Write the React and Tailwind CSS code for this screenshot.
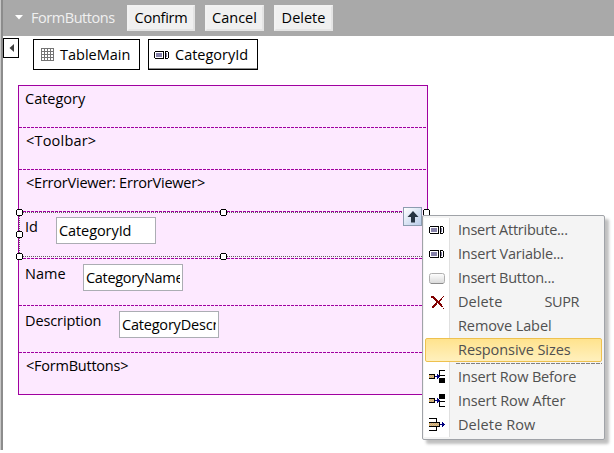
import React from "react";

const AttributeIcon = () => (
  <svg width="15" height="8" viewBox="0 0 15 8" shapeRendering="crispEdges">
    <path d="M1 1h13v6h-13z" fill="#fff" />
    <path d="M1 0h9v1h-9zM11 0h3v1h-3zM1 7h9v1h-9zM11 7h3v1h-3zM0 1h1v6h-1zM14 1h1v6h-1zM9 1h1v6h-1zM11 1h1v6h-1z" fill="#000" />
    <path d="M2 2h6v4h-6zM12 2h1v4h-1z" fill="#8480a8" />
  </svg>
);

const GridIcon = () => (
  <svg width="13" height="13" viewBox="0 0 13 13" shapeRendering="crispEdges">
    <path d="M.5 0v13M3.5 0v13M6.5 0v13M9.5 0v13M12.5 0v13M0 .5h13M0 3.5h13M0 6.5h13M0 9.5h13M0 12.5h13" stroke="#747474" />
  </svg>
);

const ButtonIcon = () => (
  <svg width="16" height="11" viewBox="0 0 16 11">
    <defs>
      <linearGradient id="face" x2="0" y2="1">
        <stop stopColor="#fff" />
        <stop offset="1" stopColor="#d9d9d9" />
      </linearGradient>
    </defs>
    <rect x=".5" y=".5" width="15" height="10" rx="2" fill="url(#face)" stroke="#b0b0b0" />
    <path d="M2 10.5h12" stroke="#8c8c8c" />
  </svg>
);

const DeleteIcon = () => (
  <svg width="14" height="13" viewBox="0 0 14 13" shapeRendering="crispEdges" className="ml-0.5">
    <path
      d="M0 0h3v1h-3zM0 1h4v1h-4zM2 2h3v1h-3zM3 3h3v1h-3zM4 4h3v1h-3zM5 5h4v1h-4zM5 6h4v1h-4zM4 7h2v1h-2zM7 7h3v1h-3zM3 8h3v1h-3zM8 8h3v1h-3zM2 9h3v1h-3zM9 9h2v1h-2zM1 10h3v1h-3zM10 10h2v1h-2zM1 11h2v1h-2zM12 12h1v1h-1zM8 4h2v1h-2zM9 3h2v1h-2zM10 2h1v1h-1zM11 1h1v1h-1zM12 0h1v1h-1z"
      fill="#800000"
    />
  </svg>
);

const Hatch = ({ x, y, w, h }) => (
  <>
    <rect x={x} y={y} width={w} height={h} fill="#e8b040" />
    {Array.from({ length: w * h }, (_, i) => [i % w, Math.floor(i / w)])
      .filter(([a, b]) => (a + b) % 2)
      .map(([a, b]) => (
        <rect key={`${a}-${b}`} x={x + a} y={y + b} width="1" height="1" fill="#b8b4c0" />
      ))}
  </>
);

const InsertRowIcon = ({ after }) => (
  <svg width="17" height="14" viewBox="0 0 17 14" shapeRendering="crispEdges">
    <path d="M0 4h6v1h-6zM0 8h6v1h-6zM5 5h1v3h-1z" />
    <Hatch x={0} y={5} w={5} h={3} />
    <path d="M6 6h3v1h-3zM8 4h1v5h-1zM9 5h1v3h-1zM10 6h1v1h-1z" fill="#000080" />
    {after ? (
      <path d="M10 0h6v5h-6zM10 8h1v5h-1zM10 7h6v1h-6zM10 12h6v1h-6z" />
    ) : (
      <path d="M10 0h6v1h-6zM10 1h1v4h-1zM10 5h6v1h-6zM10 8h6v5h-6z" />
    )}
  </svg>
);

const DeleteRowIcon = () => (
  <svg width="17" height="14" viewBox="0 0 17 14" shapeRendering="crispEdges">
    <path d="M0 0h8v1h-8zM7 1h1v3h-1zM0 4h11v1h-11zM0 8h11v1h-11zM10 5h1v3h-1zM7 9h1v3h-1zM0 12h8v1h-8z" />
    <Hatch x={0} y={5} w={10} h={3} />
    <path d="M11 6h5v1h-5zM13 4h1v5h-1zM14 5h1v3h-1z" fill="#000080" />
  </svg>
);

const Handle = ({ className }) => (
  <svg width="7" height="7" viewBox="0 0 7 7" shapeRendering="crispEdges" className={`absolute ${className}`}>
    <path d="M1 0h5v1h1v5h-1v1h-5v-1h-1v-5h1z" fill="#000" />
    <path d="M1 1h5v5h-5z" fill="#fff" />
  </svg>
);

const ToolButton = ({ className, children }) => (
  <button className={`h-[26px] border-2 border-t-[#f2f2f2] border-l-[#f2f2f2] border-r-[#e4e4e4] border-b-[#e4e4e4] bg-[#f0f0f0] leading-[22px] ${className}`}>
    {children}
  </button>
);

const Row = ({ className = "h-[47px]", children }) => (
  <div className={`relative flex shrink-0 items-start pl-1.5 ${className}`}>
    {children}
    <svg className="absolute bottom-0 left-0 h-px w-full" shapeRendering="crispEdges">
      <path d="M0 .5h408" stroke="#a000a0" strokeDasharray="3 1" />
    </svg>
  </div>
);

const Field = ({ className = "", children }) => (
  <div className="mt-[5px] h-[27px] w-[100px] border border-[#abadb3] bg-white px-0.5">
    <div className={`h-[25px] overflow-hidden whitespace-nowrap leading-[26px] ${className}`}>{children}</div>
  </div>
);

const menuTop = [
  ["Insert Attribute...", <AttributeIcon />, "tracking-[-0.25px]"],
  ["Insert Variable...", <AttributeIcon />, "tracking-[-0.2px]"],
  ["Insert Button...", <ButtonIcon />, "tracking-[-0.25px]"],
  ["Delete", <DeleteIcon />, "tracking-[0.1px]", "SUPR"],
  ["Remove Label", null, "tracking-[-0.1px]"],
  ["Responsive Sizes", null, "tracking-[-0.07px]"],
];
const menuBottom = [
  ["Insert Row Before", <InsertRowIcon />, "tracking-[-0.15px]"],
  ["Insert Row After", <InsertRowIcon after />, "tracking-[-0.1px]"],
  ["Delete Row", <DeleteRowIcon />, "tracking-[0.1px]"],
];

const MenuItem = ({ item: [label, icon, track, shortcut] }) => {
  const active = label === "Responsive Sizes";
  return (
    <div
      className={`relative flex h-6 items-center ${
        active ? "rounded-[2px] border border-[#eec14f] bg-linear-to-b from-[#ffe38d] to-[#fff0bd]" : "border border-transparent"
      }`}
    >
      <span className="flex w-[32px] shrink-0 items-center pl-[3px]">{icon}</span>
      <span className={`leading-[22px] whitespace-nowrap text-[#505050] ${track}`}>{label}</span>
      {shortcut && <span className="ml-auto mr-[22px] leading-[22px] tracking-[-0.4px] text-[#505050]">{shortcut}</span>}
    </div>
  );
};

export default function App() {
  return (
    <div className="relative h-[453px] w-[614px] overflow-hidden bg-white font-['Open_Sans','Noto_Sans',sans-serif] text-[14.5px] text-black">
      <div className="flex h-[450px]">
        <div className="w-[3px] shrink-0 border-r-2 border-[#8c8c8c] bg-[#c8c8c8]" />
        <div className="flex grow flex-col">
          <header className="flex h-9 items-start bg-[#a9a9a9] pt-[5px]">
            <svg width="8" height="5" viewBox="0 0 8 5" className="mt-[10px] ml-3">
              <path d="M0 0h8l-4 4.500z" fill="#fff" />
            </svg>
            <span className="ml-2 w-[96px] leading-[26px] tracking-[-0.45px] text-[#f0f0f0]">FormButtons</span>
            <ToolButton className="w-[68px] tracking-[-0.25px]">Confirm</ToolButton>
            <ToolButton className="ml-2.5 w-[59px]">Cancel</ToolButton>
            <ToolButton className="ml-2.5 w-[59px]">Delete</ToolButton>
          </header>

          <nav className="flex h-[49px] items-start pt-[3px]">
            <div className="-mt-px flex h-5 w-4 items-center justify-center border border-black">
              <svg width="5" height="8" viewBox="0 0 5 8">
                <path d="M5 0v8l-4.500-4z" fill="#404040" />
              </svg>
            </div>
            <div className="ml-3.5 flex h-[31px] w-[107px] items-center border border-black pl-[7px]">
              <GridIcon />
              <span className="ml-1.5 leading-[29px]">TableMain</span>
            </div>
            <div className="ml-2 flex h-[31px] w-[110px] items-center border border-black pl-[5px] shadow-[inset_0_-1px_0_#909090]">
              <AttributeIcon />
              <span className="ml-1.5 leading-[29px]">CategoryId</span>
            </div>
          </nav>

          <main className="relative ml-[15px] flex h-[310px] w-[410px] flex-col border border-[#a000a0] bg-[#fde9ff]">
            <Row className="h-[42px]"><span className="leading-[26px]">Category</span></Row>
            <Row className="h-[42px]"><span className="ml-px leading-[26px] tracking-[0.2px]">&lt;Toolbar&gt;</span></Row>
            <Row className="h-[42px]"><span className="ml-px leading-[26px] tracking-[-0.22px]">&lt;ErrorViewer: ErrorViewer&gt;</span></Row>
            <Row>
              <span className="w-[31px] leading-[30px]">Id</span>
              <Field className="tracking-[-0.08px]">CategoryId</Field>
            </Row>
            <Row>
              <span className="w-[58px] leading-[30px]">Name</span>
              <Field className="tracking-[-0.3px]">CategoryName</Field>
            </Row>
            <Row>
              <span className="w-[94px] leading-[30px] tracking-[-0.1px]">Description</span>
              <Field className="tracking-[-0.2px]">CategoryDescription</Field>
            </Row>
            <div className="pl-[7px] leading-[26px] tracking-[-0.23px]">&lt;FormButtons&gt;</div>

            <svg width="408" height="46" shapeRendering="crispEdges" className="absolute top-[126px] left-0">
              <path d="M0 .5h408M0 44.500h408M.5 0v45" stroke="#606060" strokeDasharray="1 1" />
            </svg>
            <Handle className="top-[123px] left-[-3px]" />
            <Handle className="top-[123px] left-[201px]" />
            <Handle className="top-[123px] left-[404px]" />
            <Handle className="top-[145px] left-[-3px]" />
            <Handle className="top-[167px] left-[-3px]" />
            <Handle className="top-[167px] left-[201px]" />
            <div className="absolute top-[121px] left-[384px] flex size-[19px] items-center justify-center border border-[#8c9cb0] bg-linear-to-br from-white to-[#b8cbe8]">
              <svg width="12" height="12" viewBox="0 0 12 12">
                <path d="M6 0l5.500 6h-3.500v5.500h-4v-5.500h-3.500z" fill="#263442" />
              </svg>
            </div>
          </main>
        </div>
      </div>

      <div className="absolute top-[215px] left-[422px] h-[225px] w-[183px] rounded-[2px] border border-[#a0a3a8] bg-[#f4f4f4] p-0.5 shadow-[4px_4px_3px_rgba(0,0,0,0.25)]">
        <div className="absolute top-0.5 left-px h-[219px] w-[26px] border-r border-[#e0e0e0] bg-white" />
        {menuTop.map((m) => <MenuItem key={m[0]} item={m} />)}
        <div className="relative h-[3px]">
          <svg className="absolute top-px left-[31px] h-px w-[146px]" shapeRendering="crispEdges">
            <path d="M0 .5h146" stroke="#808080" strokeDasharray="4 1" />
          </svg>
        </div>
        {menuBottom.map((m) => <MenuItem key={m[0]} item={m} />)}
      </div>
    </div>
  );
}
